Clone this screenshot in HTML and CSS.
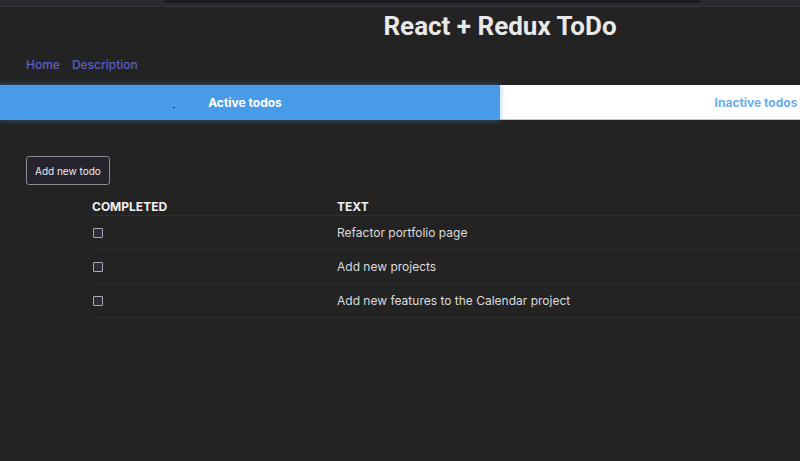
FILE: index.html
```html
<!DOCTYPE html>
<html>
<head>
<meta charset="utf-8">
<link rel="stylesheet" href="styles.css">
</head>
<body>
<div class="topstrip"><div class="topbar"></div></div>
<div class="page">
  <h1 class="title">React + Redux ToDo</h1>
  <nav class="nav">
    <a class="nav-link">Home</a>
    <a class="nav-link">Description</a>
  </nav>
  <div class="tabs">
    <div class="tab tab-active"><span class="dash"></span>Active todos</div>
    <div class="tab tab-inactive">Inactive todos</div>
  </div>
  <div class="content">
    <button class="add-btn">Add new todo</button>
    <table class="todo-table">
      <thead>
        <tr><th class="col-completed">Completed</th><th>Text</th></tr>
      </thead>
      <tbody>
        <tr><td><span class="checkbox"></span></td><td>Refactor portfolio page</td></tr>
        <tr><td><span class="checkbox"></span></td><td>Add new projects</td></tr>
        <tr><td><span class="checkbox"></span></td><td>Add new features to the Calendar project</td></tr>
      </tbody>
    </table>
  </div>
</div>
</body>
</html>
```
FILE: styles.css
```css
html, body {
  margin: 0;
  padding: 0;
  overflow: hidden;
  background: #232323;
  font-family: Inter, "Noto Sans", sans-serif;
  color: #e6e6e6;
}
.topstrip {
  height: 6px;
  background: #2a2930;
  border-bottom: 1px solid #34333d;
  display: flex;
}
.topbar {
  margin-left: 165px;
  width: 535px;
  height: 3px;
  background: #1b1a21;
}
.page {
  width: 1000px;
}
.title {
  margin: 1px 0 0;
  text-align: center;
  font-family: Roboto, Inter, sans-serif;
  font-size: 26px;
  font-weight: 700;
  color: #e8e8e8;
  line-height: 36px;
}
.nav {
  display: flex;
  gap: 12px;
  padding: 13px 26px 0;
  height: 22px;
}
.nav-link {
  color: #5a5fcb;
  font-size: 12px;
  font-weight: 500;
  line-height: 16px;
}
.tabs {
  display: flex;
  margin-top: 6px;
  height: 35px;
}
.tab {
  width: 50%;
  box-sizing: border-box;
  display: flex;
  align-items: center;
  justify-content: center;
  font-size: 12px;
  font-weight: 700;
  position: relative;
}
.tab-active {
  background: #4a9be7;
  color: #ffffff;
  box-shadow: 0 0 6px rgba(74, 155, 231, 0.5);
  z-index: 1;
  padding-right: 10px;
}
.tab-inactive {
  background: #ffffff;
  color: #6aaeea;
  border-bottom: 1px solid #c8c8c8;
  padding-left: 12px;
}
.dash {
  position: absolute;
  left: 173px;
  top: 22px;
  width: 2px;
  height: 1px;
  background: #2a3a80;
}
.content {
  padding: 36px 26px 0;
}
.add-btn {
  display: block;
  font-family: Inter, sans-serif;
  font-size: 10px;
  color: #ececec;
  background: #25242c;
  border: 1px solid #8a8a90;
  border-radius: 3px;
  height: 29px;
  padding: 0 8px;
}
.todo-table {
  margin: 11px 0 0 66px;
  border-collapse: collapse;
  width: 908px;
}
.todo-table th {
  text-align: left;
  text-transform: uppercase;
  font-size: 12px;
  font-weight: 700;
  color: #f0f0f0;
  height: 18px;
  padding: 0;
  vertical-align: bottom;
  padding-bottom: 1px;
  border-bottom: 1px solid #2a3038;
}
.col-completed {
  width: 245px;
}
.todo-table td {
  font-size: 12px;
  color: #dcdcdc;
  height: 33px;
  padding: 0;
  border-bottom: 1px solid #2a3038;
  vertical-align: middle;
}
.checkbox {
  display: block;
  width: 8px;
  height: 8px;
  border: 1px solid #a9a9b0;
  border-radius: 1px;
  background: #2d2c3c;
  margin-left: 1px;
}
```
